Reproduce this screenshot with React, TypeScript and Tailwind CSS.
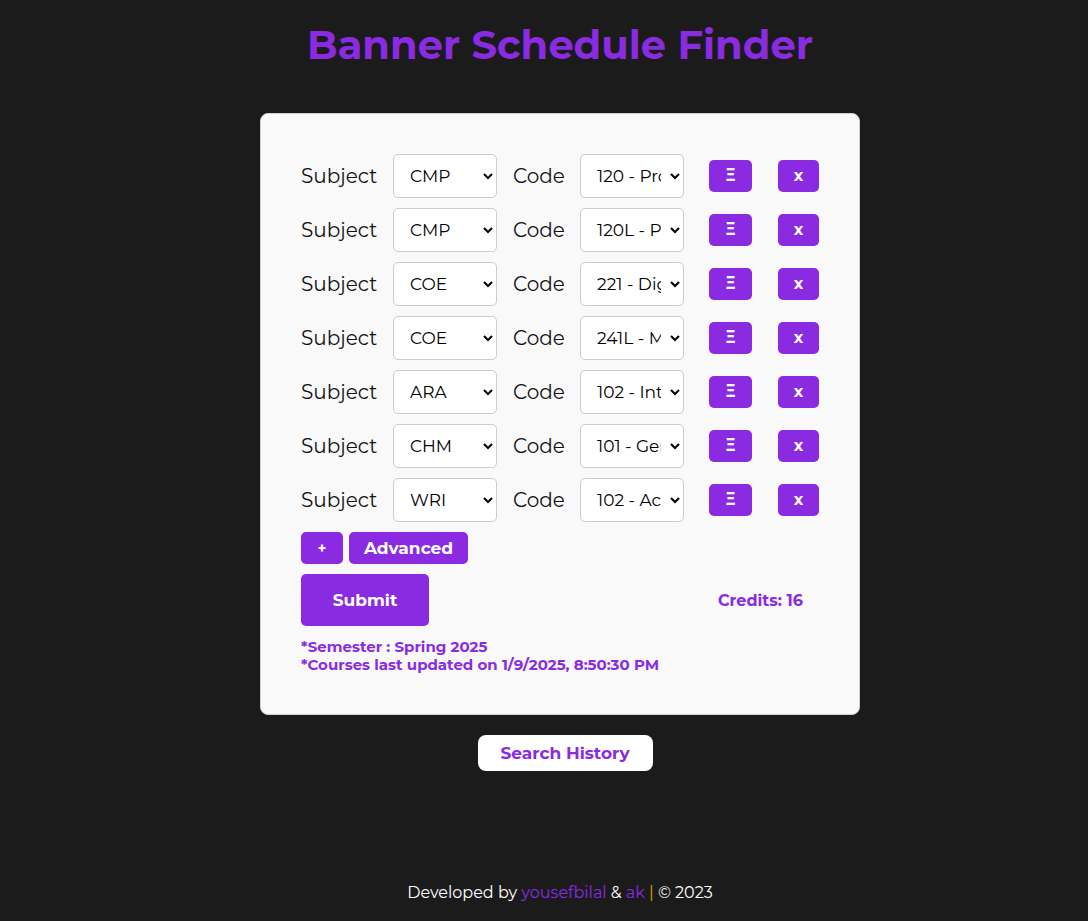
import { useState } from 'react';

const rows = [
  { subject: 'CMP', code: '120 - Programming for Engineers' },
  { subject: 'CMP', code: '120L - Programming Lab' },
  { subject: 'COE', code: '221 - Digital Systems' },
  { subject: 'COE', code: '241L - Microprocessors Lab' },
  { subject: 'ARA', code: '102 - Intro to Arabic' },
  { subject: 'CHM', code: '101 - General Chemistry' },
  { subject: 'WRI', code: '102 - Academic Writing' },
];

const subjects = ['ARA', 'CHM', 'CMP', 'COE', 'WRI'];

export default function App() {
  const [courses] = useState(rows);

  return (
    <div className="min-h-screen bg-[#1b1b1b] flex flex-col items-center pl-[32px] font-['Montserrat','Open_Sans',sans-serif]">
      <h1 className="mt-[20px] text-[40px] leading-[50px] font-bold text-[#8a2be2]">
        Banner Schedule Finder
      </h1>

      {/* Form card */}
      <div className="mt-[43px] w-[600px] bg-[#f9f9f9] rounded-[8px] border border-[#d0d0d0] px-[40px] pt-[40px] pb-[40px]">
        <div className="flex flex-col gap-[10px]">
          {courses.map((c, i) => (
            <div key={i} className="flex items-center">
              <span className="w-[92px] text-[20px] text-[#111]">Subject</span>
              <select
                defaultValue={c.subject}
                className="w-[104px] h-[44px] bg-white border border-[#cccccc] rounded-[5px] pl-[12px] pr-[6px] text-[17px] text-black"
              >
                {subjects.map(s => (
                  <option key={s}>{s}</option>
                ))}
              </select>
              <span className="ml-[16px] w-[67px] text-[20px] text-[#111]">Code</span>
              <select
                defaultValue={c.code}
                className="w-[104px] h-[44px] bg-white border border-[#cccccc] rounded-[5px] pl-[12px] pr-[6px] text-[17px] text-black"
              >
                <option>{c.code}</option>
              </select>
              <button className="ml-[25px] w-[43px] h-[32px] rounded-[5px] bg-[#8a2be2] text-white text-[17px] font-bold">
                Ξ
              </button>
              <button className="ml-[26px] w-[41px] h-[32px] rounded-[5px] bg-[#8a2be2] text-white text-[16px] font-bold">
                x
              </button>
            </div>
          ))}
        </div>

        <div className="mt-[10px] flex gap-[6px]">
          <button className="w-[42px] h-[32px] pt-[1px] rounded-[5px] bg-[#8a2be2] text-white text-[15px] font-bold">+</button>
          <button className="w-[119px] h-[32px] pt-[1px] rounded-[5px] bg-[#8a2be2] text-white text-[17px] font-bold">Advanced</button>
        </div>

        <div className="mt-[10px] flex items-center justify-between">
          <button className="w-[128px] h-[52px] pt-[1px] rounded-[5px] bg-[#8a2be2] text-white text-[17px] font-bold">Submit</button>
          <span className="mr-[16px] pt-[2px] text-[16px] font-bold text-[#8a2be2]">Credits: 16</span>
        </div>

        <div className="mt-[12px] text-[15px] leading-[18px] font-bold text-[#8a2be2]">
          <p>*Semester : Spring 2025</p>
          <p>*Courses last updated on 1/9/2025, 8:50:30 PM</p>
        </div>
      </div>

      <button className="mt-[20px] ml-[10px] w-[175px] h-[36px] pt-[1px] rounded-[8px] bg-white text-[17px] font-bold text-[#8a2be2]">
        Search History
      </button>

      <footer className="mt-auto pb-[16px] text-[16px] text-white">
        Developed by <span className="text-[#8a2be2]">yousefbilal</span> &amp;{' '}
        <span className="text-[#8a2be2]">ak</span> <span className="text-[#e0a800]">|</span> © 2023
      </footer>
    </div>
  );
}
